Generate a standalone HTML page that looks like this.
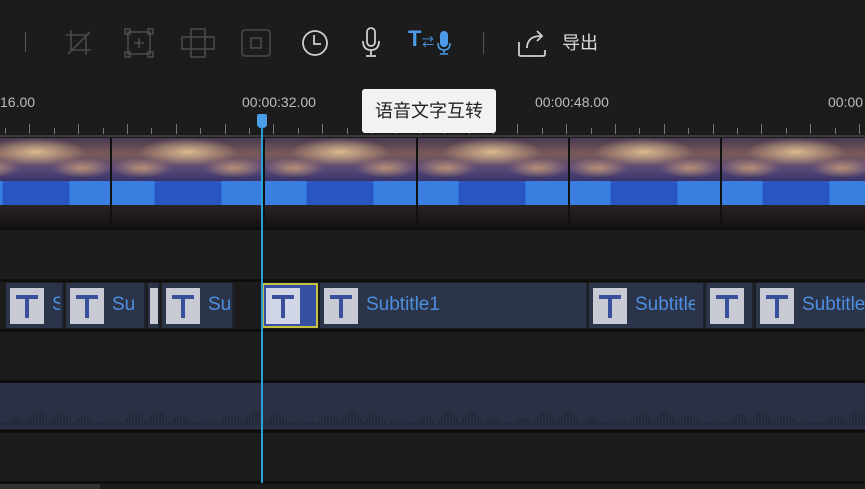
<!DOCTYPE html>
<html><head><meta charset="utf-8"><style>
*{margin:0;padding:0;box-sizing:border-box}
body{width:865px;height:489px;background:#1c1c1c;position:relative;overflow:hidden;font-family:"Liberation Sans","Noto Sans CJK SC",sans-serif}
.a{position:absolute}
.ic{position:absolute;top:26px}
.lbl{position:absolute;top:94px;font-size:14px;color:#bdbdbd}
.tick{position:absolute;width:1px;background:#777}
.line{position:absolute;left:0;width:865px;height:3px;background:#0e0e0e}
.vid{position:absolute;left:0;top:138px;width:865px;height:89px;
background:
radial-gradient(ellipse 50px 14px at 76px 14px,#d8b890,rgba(0,0,0,0)),
radial-gradient(ellipse 30px 10px at 30px 30px,#b89078,rgba(0,0,0,0)),
radial-gradient(ellipse 30px 10px at 122px 30px,#b89078,rgba(0,0,0,0)),
linear-gradient(180deg,#4a3a52 0,#7a5a58 18%,#5a4a78 34%,#3a3468 48%);
background-size:152px 89px;background-position:-40px 0}
.band{position:absolute;left:0;top:181px;width:865px;height:24px;
background:linear-gradient(90deg,#3a7ee0 0,#3a7ee0 28%,#2a56c4 28%,#2a56c4 72%,#3a7ee0 72%);background-size:152px 24px;background-position:-40px 0}
.crowd{position:absolute;left:0;top:205px;width:865px;height:22px;background:linear-gradient(180deg,#2a2224,#151214)}
.sep{position:absolute;top:138px;width:2px;height:89px;background:#111}
.clip{position:absolute;top:283px;height:45px;background:#2b3449;border-right:2px solid #1e2330}
.tb{position:absolute;top:5px;left:4px;width:34px;height:36px;background:#c8cbd4}
.tb:before{content:"";position:absolute;left:6px;top:7px;width:22px;height:4px;background:#3a4f9a}
.tb:after{content:"";position:absolute;left:15px;top:7px;width:4px;height:23px;background:#3a4f9a}
.ct{position:absolute;top:11px;left:46px;font-size:19px;color:#4d8fe0;white-space:nowrap;overflow:hidden}
</style></head><body>
<div class="a" style="left:25px;top:32px;width:1px;height:20px;background:#555"></div>
<svg class="ic" style="left:62px" width="34" height="34" viewBox="0 0 34 34" fill="none" stroke="#4a4a4a" stroke-width="1.6"><path d="M9 4v20h20M4 9h20v20M6 28L28 6"/></svg>
<svg class="ic" style="left:122px" width="34" height="34" viewBox="0 0 34 34" fill="none" stroke="#4a4a4a" stroke-width="1.6"><rect x="6" y="6" width="22" height="22"/><rect x="3" y="3" width="5" height="5"/><rect x="26" y="3" width="5" height="5"/><rect x="3" y="26" width="5" height="5"/><rect x="26" y="26" width="5" height="5"/><path d="M17 12v10M12 17h10"/></svg>
<svg class="ic" style="left:180px" width="36" height="34" viewBox="0 0 36 34" fill="none" stroke="#4a4a4a" stroke-width="1.6"><rect x="2" y="11" width="32" height="12"/><rect x="11" y="3" width="14" height="28"/></svg>
<svg class="ic" style="left:239px" width="34" height="34" viewBox="0 0 34 34" fill="none" stroke="#4a4a4a" stroke-width="1.6"><rect x="3" y="4" width="28" height="26" rx="3"/><rect x="12" y="12" width="10" height="10"/></svg>
<svg class="ic" style="left:298px" width="34" height="34" viewBox="0 0 34 34" fill="none" stroke="#cfcfcf" stroke-width="1.8"><circle cx="17" cy="17" r="12"/><path d="M16 9v9h7"/></svg>
<svg class="ic" style="left:358px" width="26" height="34" viewBox="0 0 26 34" fill="none" stroke="#cfcfcf" stroke-width="1.8"><rect x="9" y="2" width="8" height="18" rx="4"/><path d="M5 15q0 9 8 9q8 0 8-9M13 24v5M8 30h10"/></svg>
<div class="a" style="left:408px;top:26px;font-size:22px;font-weight:bold;color:#4d9ae8">T</div>
<div class="a" style="left:422px;top:33px;font-size:12px;color:#4d9ae8">⇄</div>
<svg class="a" style="left:436px;top:30px" width="16" height="26" viewBox="0 0 16 26"><rect x="4" y="1" width="8" height="16" rx="4" fill="#4d9ae8"/><path d="M2 13q0 7 6 7q6 0 6-7M8 20v3M4 24h8" fill="none" stroke="#4d9ae8" stroke-width="1.6"/></svg>
<div class="a" style="left:483px;top:32px;width:1px;height:22px;background:#555"></div>
<svg class="ic" style="left:515px" width="36" height="34" viewBox="0 0 36 34" fill="none" stroke="#cfcfcf" stroke-width="1.8"><path d="M4 16v12q0 2 2 2h22q2 0 2-2v-4"/><path d="M12 22q0-12 14-12M22 5l5 5-5 5"/></svg>
<div class="a" style="left:562px;top:29px;font-size:18px;color:#dcdcdc">导出</div>
<div class="lbl" style="left:0">16.00</div>
<div class="lbl" style="left:242px">00:00:32.00</div>
<div class="lbl" style="left:535px">00:00:48.00</div>
<div class="lbl" style="left:828px">00:00</div>
<div id="ticks"></div>
<div class="a" style="left:0;top:135px;width:865px;height:2px;background:#3a3a3a"></div>
<div class="a" style="left:362px;top:89px;width:134px;height:44px;background:#f2f2f2;border-radius:3px;font-size:18px;color:#222;line-height:44px;text-align:center">语音文字互转</div>
<div class="vid"></div>
<div class="band"></div>
<div class="crowd"></div>
<div class="sep" style="left:110px"></div><div class="sep" style="left:263px"></div><div class="sep" style="left:416px"></div><div class="sep" style="left:568px"></div><div class="sep" style="left:720px"></div>
<div class="line" style="top:227px"></div>
<div class="line" style="top:279px"></div>
<div class="clip" style="left:6px;width:58px"><div class="tb"></div><div class="ct" style="width:8px">S</div></div>
<div class="clip" style="left:66px;width:80px"><div class="tb"></div><div class="ct" style="width:30px">Su</div></div>
<div class="clip" style="left:148px;width:12px"><div class="a" style="left:2px;top:5px;width:8px;height:36px;background:#c8cbd4"></div></div>
<div class="clip" style="left:162px;width:72px"><div class="tb"></div><div class="ct" style="width:22px">Su</div></div>
<div class="clip" style="left:262px;width:56px;border:2px solid #c8c040;background:#3550a0"><div class="tb" style="top:3px;left:2px;background:#d0d6e6"></div></div>
<div class="clip" style="left:320px;width:268px"><div class="tb"></div><div class="ct">Subtitle1</div></div>
<div class="clip" style="left:589px;width:116px"><div class="tb"></div><div class="ct" style="width:60px">Subtitle1</div></div>
<div class="clip" style="left:706px;width:48px"><div class="tb"></div></div>
<div class="clip" style="left:756px;width:109px;border:none"><div class="tb"></div><div class="ct">Subtitle1</div></div>
<div class="line" style="top:329px"></div>
<div class="line" style="top:380px"></div>
<div class="a" style="left:0;top:383px;width:865px;height:46px;background:#2a3144"></div>
<svg class="a" style="left:0;top:395px" width="865" height="30" id="wave"></svg>
<div class="line" style="top:430px"></div>
<div class="line" style="top:481px"></div>
<div class="a" style="left:0;top:484px;width:100px;height:5px;background:#333"></div>
<div class="a" style="left:261px;top:128px;width:2px;height:355px;background:#2aa0d8"></div>
<div class="a" style="left:257px;top:114px;width:10px;height:14px;background:#4a9ee6;border-radius:2px 2px 4px 4px"></div>
<script>
var t='';for(var i=0;i<36;i++){var x=5+i*24.4;var big=(i%2==1);t+='<div class="tick" style="left:'+x.toFixed(0)+'px;top:'+(big?124:128)+'px;height:'+(big?10:6)+'px"></div>';}
document.getElementById('ticks').innerHTML=t;
var w='';for(var x=0;x<865;x+=3){var h=2+Math.abs(Math.sin(x*0.13)*Math.sin(x*0.031))*12;w+='<rect x="'+x+'" y="'+(30-h)+'" width="2" height="'+h+'" fill="#222a3a"/>';}
document.getElementById('wave').innerHTML=w;
</script>
</body></html>
